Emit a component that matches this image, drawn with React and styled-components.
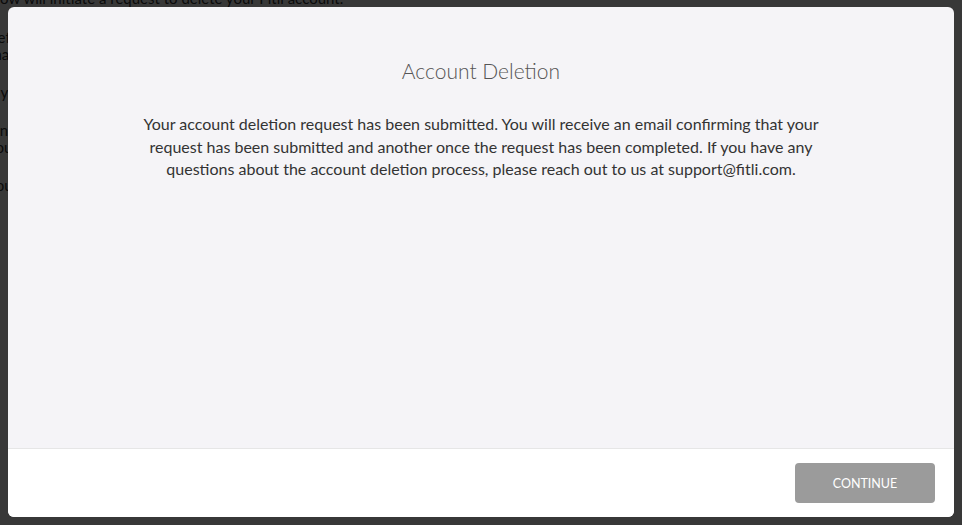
import React from "react";
import styled, { createGlobalStyle } from "styled-components";

const Global = createGlobalStyle`
  html, body { margin: 0; padding: 0; background: #383838; }
  body { font-family: "Lato", "Liberation Sans", sans-serif; }
`;

const Page = styled.div`
  position: relative;
  width: 962px;
  height: 525px;
  overflow: hidden;
  background: #fff;
`;

const BackText = styled.div`
  margin-top: -10px;
  font-size: 15px;
  line-height: 17px;
  color: #333;
`;

const BackPara = styled.p`
  margin: 0 0 21px -12px;
  &:first-child { margin: 0 0 22px 0; }
`;

const Overlay = styled.div`
  position: absolute;
  inset: 0;
  background: rgba(0, 0, 0, 0.78);
  padding: 7px 8px 8px 8px;
  display: flex;
`;

const Modal = styled.div`
  flex: 1;
  display: flex;
  flex-direction: column;
  border-radius: 6px;
  overflow: hidden;
  background: #f5f4f7;
`;

const Body = styled.div`
  flex: 1;
  padding: 52px 60px 0;
  text-align: center;
`;

const Title = styled.h2`
  margin: 0;
  font-weight: 300;
  font-size: 21px;
  color: #555;
  line-height: 24px;
`;

const Message = styled.p`
  margin: 30px auto 0;
  max-width: 700px;
  font-size: 16px;
  line-height: 22.5px;
  color: #333;
`;

const Footer = styled.div`
  height: 69px;
  background: #fff;
  border-top: 1px solid #e6e6e6;
  display: flex;
  justify-content: flex-end;
  align-items: flex-start;
  padding: 14px 19px 0 0;
  box-sizing: border-box;
`;

const Button = styled.button`
  width: 140px;
  height: 40px;
  border: none;
  border-radius: 4px;
  background: #9b9b9b;
  color: #fff;
  font-family: inherit;
  font-size: 12.5px;
  text-transform: uppercase;
  cursor: pointer;
`;

export default function App() {
  return (
    <Page>
      <Global />
      <BackText>
        <BackPara>ow will initiate a request to delete your Fitli account.</BackPara>
        <BackPara>Before deleting, please be aware<br />that deleting your account</BackPara>
        <BackPara>If you have</BackPara>
        <BackPara>Once your account<br />your data will</BackPara>
        <BackPara>You will<br />a.</BackPara>
      </BackText>
      <Overlay>
        <Modal>
          <Body>
            <Title>Account Deletion</Title>
            <Message>
              Your account deletion request has been submitted. You will receive an email confirming that your
              request has been submitted and another once the request has been completed. If you have any
              questions about the account deletion process, please reach out to us at support@fitli.com.
            </Message>
          </Body>
          <Footer>
            <Button>Continue</Button>
          </Footer>
        </Modal>
      </Overlay>
    </Page>
  );
}
